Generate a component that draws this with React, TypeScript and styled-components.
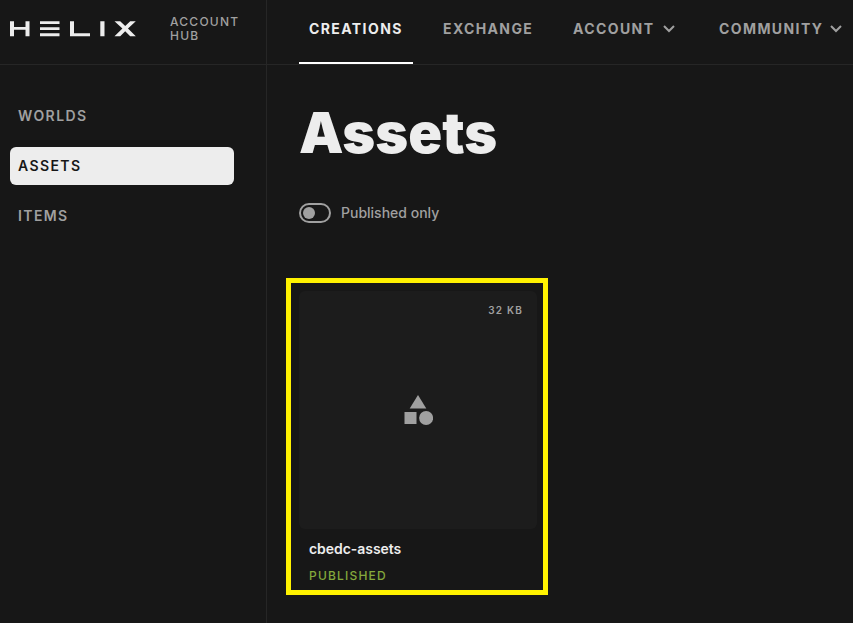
import React from "react";
import styled, { createGlobalStyle } from "styled-components";

const Global = createGlobalStyle`
  *, *::before, *::after { box-sizing: border-box; }
  body {
    margin: 0;
    background: #171717;
    color: #ededed;
    font-family: Inter, "Liberation Sans", sans-serif;
    overflow: hidden;
  }
`;

const Page = styled.div`
  display: grid;
  grid-template-columns: 267px 1fr;
  grid-template-rows: 65px 1fr;
  width: 853px;
  height: 623px;
  overflow: hidden;
`;

const Brand = styled.div`
  display: flex;
  align-items: flex-start;
  gap: 34px;
  padding: 15px 0 0 10px;
  border-right: 1px solid #262626;
  border-bottom: 1px solid #262626;
`;

const Logo = styled.svg`
  display: block;
  flex: none;
  margin-top: 6px;
  fill: #ededed;
`;

const BrandLabel = styled.div`
  font-size: 12px;
  line-height: 14px;
  font-weight: 500;
  letter-spacing: 1.25px;
  color: #a0a0a0;
`;

const TopNav = styled.nav`
  display: flex;
  gap: 20px;
  padding-left: 32px;
  border-bottom: 1px solid #262626;
`;

const Tab = styled.a<{ $width: number; $active?: boolean }>`
  display: flex;
  flex: none;
  align-items: flex-start;
  justify-content: space-between;
  width: ${(p) => p.$width}px;
  padding: 20px 0 0 10px;
  border-bottom: 2px solid ${(p) => (p.$active ? "#ffffff" : "transparent")};
  color: ${(p) => (p.$active ? "#ededed" : "#a0a0a0")};
  font-size: 14px;
  line-height: 18px;
  font-weight: 700;
  letter-spacing: 1.4px;
  white-space: nowrap;
`;

const Chevron = styled.svg`
  display: block;
  flex: none;
  margin: 4px 14px 0 0;
  fill: none;
  stroke: #a0a0a0;
  stroke-width: 2;
`;

const Sidebar = styled.aside`
  display: flex;
  flex-direction: column;
  gap: 12px;
  padding: 32px 32px 0 10px;
  border-right: 1px solid #262626;
`;

const SideLink = styled.a<{ $active?: boolean }>`
  display: flex;
  align-items: center;
  height: 38px;
  padding: 0 0 2px 8px;
  border-radius: 6px;
  background: ${(p) => (p.$active ? "#ededed" : "transparent")};
  color: ${(p) => (p.$active ? "#171717" : "#a0a0a0")};
  font-size: 14px;
  font-weight: 600;
  letter-spacing: 1.4px;
`;

const Main = styled.main`
  padding: 32px 0 0 19px;
`;

const Title = styled.h1`
  margin: 0 0 0 13px;
  font-size: 56px;
  line-height: 72px;
  font-weight: 900;
  letter-spacing: 0;
`;

const Filter = styled.label`
  display: flex;
  align-items: center;
  gap: 10px;
  height: 20px;
  margin: 34px 0 0 13px;
  color: #a0a0a0;
  font-size: 14px;
  font-weight: 500;
`;

const FilterText = styled.span`
  padding-bottom: 2px;
`;

const Switch = styled.span`
  display: flex;
  align-items: center;
  width: 32px;
  height: 20px;
  padding-left: 2px;
  border: 2px solid #a0a0a0;
  border-radius: 10px;
`;

const Knob = styled.span`
  width: 12px;
  height: 12px;
  border-radius: 50%;
  background: #a0a0a0;
`;

const Highlight = styled.section`
  width: 262px;
  height: 317px;
  margin-top: 55px;
  padding: 8px;
  border: 5px solid #fff200;
`;

const Thumb = styled.div`
  display: grid;
  grid-template-rows: 40px 1fr 40px;
  justify-items: center;
  align-items: center;
  width: 238px;
  height: 238px;
  border-radius: 6px;
  background: #1c1c1c;
`;

const Size = styled.span`
  justify-self: end;
  padding: 0 14px 2px 0;
  color: #a0a0a0;
  font-size: 10px;
  font-weight: 600;
  letter-spacing: 1.2px;
`;

const AssetName = styled.div`
  margin: 11px 0 0 10px;
  font-size: 14px;
  line-height: 18px;
  font-weight: 600;
  letter-spacing: -0.05px;
`;

const Status = styled.div`
  margin: 10px 0 0 10px;
  color: #84a93c;
  font-size: 12px;
  line-height: 16px;
  font-weight: 500;
  letter-spacing: 1.2px;
`;

const HelixLogo = () => (
  <Logo width="126" height="16" viewBox="0 0 126 16" aria-label="Helix">
    <path d="M0 .3h4v5.8h11.5V.3h4v15h-4V8.8H0zM0 8.8h4v6.5H0z" />
    <path d="M30 .3h19.5v2.8H30zM30 6.3h19.5v2.7H30zM30 12.3h19.5v3H30z" />
    <path d="M60 .3h4v12h16v3H60zM90.3.3h4.2v15h-4.2z" />
    <path d="M104.5.3h5.7l5 4.8 5-4.8h5.6l-7.8 7.3 7.8 7.7h-5.6l-5-5-5 5h-5.7l7.9-7.7z" />
  </Logo>
);

const Down = () => (
  <Chevron width="12" height="10" viewBox="1 0 12 10">
    <path d="M2 2l5 5 5-5" />
  </Chevron>
);

const Shapes = () => (
  <svg width="30" height="32" viewBox="0 0 30 32" fill="#a0a0a0">
    <path d="M15 1L23.3 14.5H6.7z" />
    <path d="M1.5 18h12v12h-12z" />
    <circle cx="23.1" cy="24" r="7" />
  </svg>
);

export default function App() {
  return (
    <>
      <Global />
      <Page>
        <Brand>
          <HelixLogo />
          <BrandLabel>
            ACCOUNT
            <br />
            HUB
          </BrandLabel>
        </Brand>
        <TopNav>
          <Tab $width={114} $active>CREATIONS</Tab>
          <Tab $width={110}>EXCHANGE</Tab>
          <Tab $width={126}>ACCOUNT<Down /></Tab>
          <Tab $width={147}>COMMUNITY<Down /></Tab>
        </TopNav>
        <Sidebar>
          <SideLink>WORLDS</SideLink>
          <SideLink $active>ASSETS</SideLink>
          <SideLink>ITEMS</SideLink>
        </Sidebar>
        <Main>
          <Title>Assets</Title>
          <Filter>
            <Switch><Knob /></Switch>
            <FilterText>Published only</FilterText>
          </Filter>
          <Highlight>
            <Thumb>
              <Size>32 KB</Size>
              <Shapes />
            </Thumb>
            <AssetName>cbedc-assets</AssetName>
            <Status>PUBLISHED</Status>
          </Highlight>
        </Main>
      </Page>
    </>
  );
}
